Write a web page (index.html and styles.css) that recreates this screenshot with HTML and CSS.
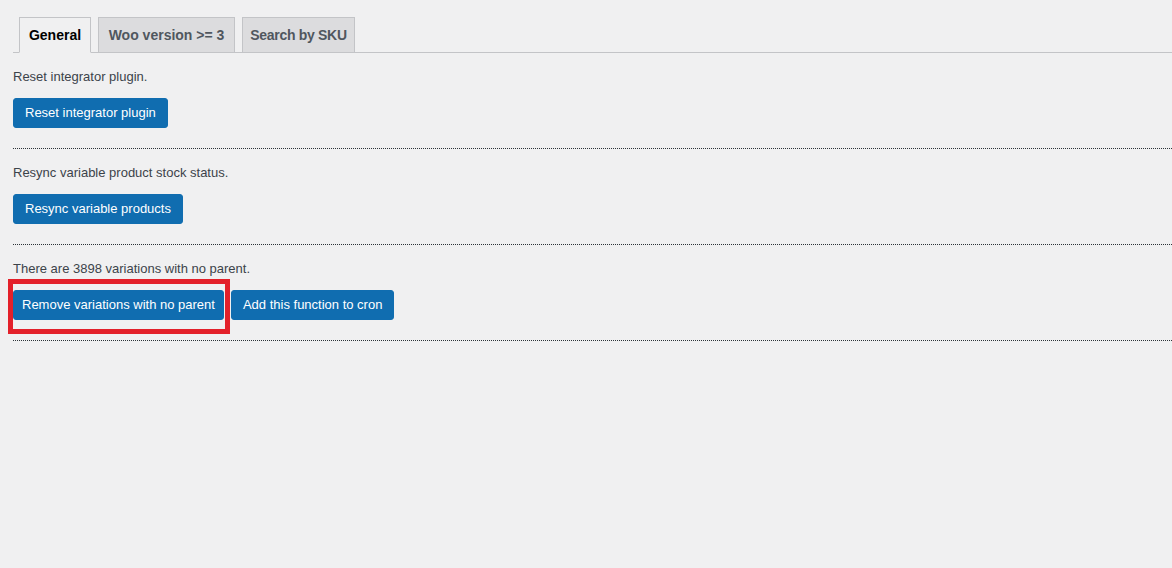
FILE: index.html
```html
<!DOCTYPE html>
<html lang="en">
<head>
<meta charset="utf-8">
<title>Integrator tools</title>
<link rel="stylesheet" href="styles.css">
</head>
<body>
<div class="wrap">
  <nav class="nav-tab-wrapper">
    <a class="nav-tab nav-tab-active tab-general" href="#">General</a>
    <a class="nav-tab tab-woo" href="#">Woo version &gt;= 3</a>
    <a class="nav-tab tab-sku" href="#">Search by SKU</a>
  </nav>

  <div class="tool">
    <p class="desc">Reset integrator plugin.</p>
    <div class="actions">
      <button class="button-primary" type="button">Reset integrator plugin</button>
    </div>
  </div>

  <div class="tool">
    <p class="desc">Resync variable product stock status.</p>
    <div class="actions">
      <button class="button-primary" type="button">Resync variable products</button>
    </div>
  </div>

  <div class="tool">
    <p class="desc">There are 3898 variations with no parent.</p>
    <div class="actions">
      <span class="highlight-wrap">
        <button class="button-primary btn-remove" type="button">Remove variations with no parent</button>
        <span class="highlight"></span>
      </span>
      <button class="button-primary" type="button">Add this function to cron</button>
    </div>
  </div>
</div>
</body>
</html>
```

FILE: styles.css
```css
html, body {
  margin: 0;
  padding: 0;
  background: #f0f0f1;
}

body {
  font-family: "Liberation Sans", Arial, sans-serif;
  font-size: 13px;
  color: #3c434a;
}

.wrap {
  padding: 17px 0 0 13px;
}

.nav-tab-wrapper {
  display: flex;
  gap: 7px;
  padding-left: 6px;
  border-bottom: 1px solid #c3c4c7;
  height: 35px;
}

.nav-tab {
  display: block;
  box-sizing: border-box;
  height: 36px;
  padding: 5px 0;
  line-height: 24px;
  font-size: 14px;
  font-weight: 700;
  text-align: center;
  color: #50575e;
  background: #dcdcde;
  border: 1px solid #c3c4c7;
  text-decoration: none;
  white-space: nowrap;
}

.tab-general { width: 72px; }
.tab-woo { width: 137px; }
.tab-sku { width: 113px; letter-spacing: -0.3px; }

.nav-tab-active {
  color: #000;
  background: #f0f0f1;
  border-bottom-color: #f0f0f1;
}

.tool {
  border-bottom: 1px dotted #2c3338;
  padding-bottom: 20px;
}

.desc {
  margin: 14px 0 0;
  line-height: 20px;
}

.actions {
  display: flex;
  gap: 7px;
  margin-top: 11px;
}

.button-primary {
  font-family: inherit;
  font-size: 13px;
  height: 30px;
  line-height: 28px;
  padding: 0 11px;
  color: #fff;
  background: #106db0;
  border: 1px solid #106db0;
  border-radius: 3px;
  cursor: pointer;
  white-space: nowrap;
}

.btn-remove {
  padding: 0 8px;
}

.highlight-wrap {
  position: relative;
  display: block;
}

.highlight {
  position: absolute;
  left: -5px;
  top: -11px;
  right: -6px;
  bottom: -14px;
  border: 5px solid #e3202a;
  pointer-events: none;
}
```
